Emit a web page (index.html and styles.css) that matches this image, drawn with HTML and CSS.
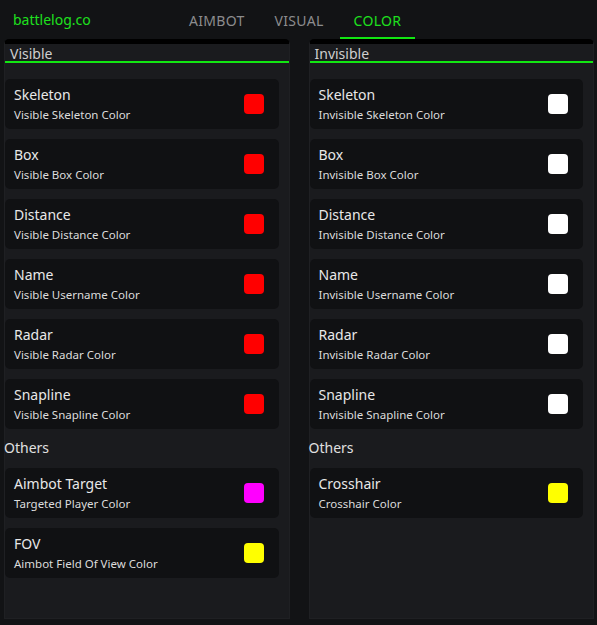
FILE: index.html
```html
<!DOCTYPE html>
<html>
<head>
    <meta charset="UTF-8">
    <title>battlelog.co</title>
    <link rel="stylesheet" href="styles.css">
</head>
<body>
    <div id="topbar">
        <div class="logo">battlelog.co</div>
        <div class="tabs">
            <span class="tab">AIMBOT</span>
            <span class="tab">VISUAL</span>
            <span class="tab active">COLOR</span>
        </div>
    </div>

    <div id="main">
        <!-- Visible -->
        <div class="panel">
            <div class="panel-title">Visible</div>
            <div class="list">
                <div class="card"><div class="info"><div class="name">Skeleton</div><div class="desc">Visible Skeleton Color</div></div><div class="swatch red"></div></div>
                <div class="card"><div class="info"><div class="name">Box</div><div class="desc">Visible Box Color</div></div><div class="swatch red"></div></div>
                <div class="card"><div class="info"><div class="name">Distance</div><div class="desc">Visible Distance Color</div></div><div class="swatch red"></div></div>
                <div class="card"><div class="info"><div class="name">Name</div><div class="desc">Visible Username Color</div></div><div class="swatch red"></div></div>
                <div class="card"><div class="info"><div class="name">Radar</div><div class="desc">Visible Radar Color</div></div><div class="swatch red"></div></div>
                <div class="card"><div class="info"><div class="name">Snapline</div><div class="desc">Visible Snapline Color</div></div><div class="swatch red"></div></div>
            </div>
            <div class="section">Others</div>
            <div class="list">
                <div class="card"><div class="info"><div class="name">Aimbot Target</div><div class="desc">Targeted Player Color</div></div><div class="swatch magenta"></div></div>
                <div class="card"><div class="info"><div class="name">FOV</div><div class="desc">Aimbot Field Of View Color</div></div><div class="swatch yellow"></div></div>
            </div>
        </div>

        <!-- Invisible -->
        <div class="panel">
            <div class="panel-title">Invisible</div>
            <div class="list">
                <div class="card"><div class="info"><div class="name">Skeleton</div><div class="desc">Invisible Skeleton Color</div></div><div class="swatch white"></div></div>
                <div class="card"><div class="info"><div class="name">Box</div><div class="desc">Invisible Box Color</div></div><div class="swatch white"></div></div>
                <div class="card"><div class="info"><div class="name">Distance</div><div class="desc">Invisible Distance Color</div></div><div class="swatch white"></div></div>
                <div class="card"><div class="info"><div class="name">Name</div><div class="desc">Invisible Username Color</div></div><div class="swatch white"></div></div>
                <div class="card"><div class="info"><div class="name">Radar</div><div class="desc">Invisible Radar Color</div></div><div class="swatch white"></div></div>
                <div class="card"><div class="info"><div class="name">Snapline</div><div class="desc">Invisible Snapline Color</div></div><div class="swatch white"></div></div>
            </div>
            <div class="section">Others</div>
            <div class="list">
                <div class="card"><div class="info"><div class="name">Crosshair</div><div class="desc">Crosshair Color</div></div><div class="swatch yellow"></div></div>
            </div>
        </div>
    </div>
</body>
</html>
```

FILE: styles.css
```css
body {
    margin: 0;
    background-color: #121315;
    font-family: 'Noto Sans', sans-serif;
    color: #e6e6e6;
    height: 625px;
    overflow: hidden;
}

#topbar {
    height: 39px;
    display: flex;
    align-items: stretch;
}

.logo {
    color: #1ee01e;
    font-size: 14px;
    padding: 2px 0 0 13px;
    line-height: 36px;
    width: 162px;
}

.tabs {
    display: flex;
    gap: 2px;
}

.tab {
    color: #8c8c8e;
    font-size: 14px;
    letter-spacing: 0.3px;
    padding: 4px 14px 0;
    line-height: 33px;
    border-bottom: 2px solid transparent;
}

.tab.active {
    color: #1ee01e;
    border-bottom-color: #12e612;
}

#main {
    display: flex;
    gap: 19px;
    padding: 0 3px 0 4px;
}

/* panele */
.panel {
    flex: 1;
    background-color: #1a1b1e;
    border: 1px solid #1f2023;
    border-top: 5px solid #000;
    border-radius: 5px 5px 0 0;
    box-sizing: border-box;
    height: 580px;
}

.panel-title {
    font-size: 14px;
    color: #cfcfcf;
    padding: 3px 5px 0;
    line-height: 14px;
    border-bottom: 2px solid #12e612;
    margin-bottom: 16px;
}

.list {
    display: flex;
    flex-direction: column;
    gap: 10px;
    margin-right: 10px;
}

.card {
    height: 50px;
    background-color: #101113;
    border-radius: 5px;
    display: flex;
    align-items: center;
    justify-content: space-between;
    padding: 0 15px 0 9px;
    box-sizing: border-box;
}

.name {
    font-size: 14px;
    color: #e8e8e8;
    line-height: 18px;
}

.desc {
    font-size: 11.5px;
    color: #dcdcdc;
    margin-top: 3px;
    line-height: 15px;
}

.section {
    font-size: 14px;
    color: #e0e0e0;
    line-height: 18px;
    margin: 10px 0 11px -1px;
}

.swatch {
    width: 20px;
    height: 20px;
    border-radius: 4px;
}

.red { background-color: #ff0000; }
.white { background-color: #ffffff; }
.magenta { background-color: #ff00ff; }
.yellow { background-color: #ffff00; }
```
